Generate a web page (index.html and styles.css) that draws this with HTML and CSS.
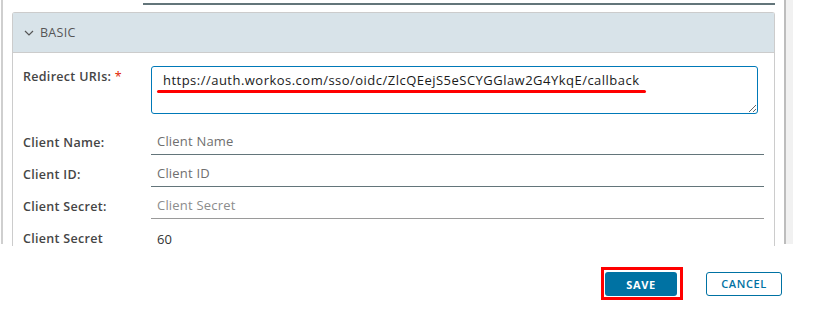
FILE: index.html
```html
<!DOCTYPE html>
<html lang="en">
<head>
  <meta charset="UTF-8">
  <title>OIDC Client Settings</title>
  <link rel="stylesheet" href="styles.css">
</head>
<body>

<div class="layout">
  <div class="gutter"></div>

  <div class="content">
    <!-- bottom edge of the field above -->
    <div class="prev-field"></div>

    <div class="panel">
      <div class="panel-head">
        <svg class="chevron" width="10" height="6" viewBox="0 0 10 6">
          <path d="M1 1 L5 5 L9 1" fill="none" stroke="#565656" stroke-width="1.2"/>
        </svg>
        BASIC
      </div>

      <div class="panel-body">
        <div class="row row-area">
          <label class="lbl">Redirect URIs: <span class="req">*</span></label>
          <div class="area-wrap">
            <textarea class="area">https://auth.workos.com/sso/oidc/ZlcQEejS5eSCYGGlaw2G4YkqE/callback</textarea>
            <div class="mark"></div>
          </div>
        </div>

        <div class="row">
          <label class="lbl">Client Name:</label>
          <input class="field" type="text" placeholder="Client Name">
        </div>

        <div class="row">
          <label class="lbl">Client ID:</label>
          <input class="field" type="text" placeholder="Client ID">
        </div>

        <div class="row">
          <label class="lbl">Client Secret:</label>
          <input class="field field-dim" type="text" placeholder="Client Secret">
        </div>

        <div class="row row-last">
          <label class="lbl">Client Secret</label>
          <span class="value">60</span>
        </div>
      </div>
    </div>
  </div>

  <div class="scroll"></div>
</div>

<div class="footer">
  <div class="highlight">
    <button class="btn btn-primary">SAVE</button>
  </div>
  <button class="btn btn-outline">CANCEL</button>
</div>

</body>
</html>
```

FILE: styles.css
```css
body {
  margin: 0;
  font-family: "Open Sans", "Noto Sans", sans-serif;
  color: #333;
  background: #fff;
  overflow: hidden;
}

.layout {
  display: flex;
  height: 244px;
}

.gutter {
  width: 9px;
  margin-left: 1px;
  border-left: 2px solid #cfcfcf;
}

.content {
  width: 763px;
}

.prev-field {
  margin-left: 131px;
  height: 3px;
  border-bottom: 2px solid #63757a;
  margin-bottom: 7px;
}

.panel {
  border: 1px solid #cccccc;
  border-bottom: none;
  border-radius: 3px 3px 0 0;
  height: 233px;
}

.panel-head {
  height: 39px;
  background: #d8e3e9;
  border-bottom: 1px solid #cccccc;
  display: flex;
  align-items: center;
  gap: 6px;
  padding-left: 11px;
  font-size: 12.5px;
  color: #565656;
  letter-spacing: 0.3px;
}

.chevron {
  margin-top: 1px;
}

.panel-body {
  padding: 13px 0 0 10px;
}

.row {
  display: flex;
  align-items: flex-end;
  height: 24px;
  margin-bottom: 8px;
}

.row-area {
  align-items: flex-start;
  height: 48px;
  margin-bottom: 17px;
}

.lbl {
  width: 128px;
  flex-shrink: 0;
  font-size: 12.5px;
  font-weight: 600;
  letter-spacing: 0.3px;
  color: #454545;
  padding-bottom: 4px;
}

.row-area .lbl {
  padding-top: 2px;
}

.req {
  color: #e12200;
  font-weight: 400;
}

.area-wrap {
  position: relative;
}

.area {
  display: block;
  box-sizing: border-box;
  width: 607px;
  height: 48px;
  border: 1px solid #0079b8;
  border-radius: 3px;
  padding: 4px 11px;
  font-family: inherit;
  font-size: 13px;
  letter-spacing: 0.48px;
  color: #1a1a1a;
  resize: vertical;
  outline: none;
}

/* red annotation under the url */
.mark {
  position: absolute;
  left: 6px;
  top: 24px;
  width: 489px;
  height: 3px;
  background: #ff0000;
  border-radius: 2px;
}

.field {
  box-sizing: border-box;
  width: 613px;
  height: 24px;
  border: none;
  border-bottom: 1px solid #63757a;
  padding: 0 6px 3px;
  font-family: inherit;
  font-size: 13px;
  letter-spacing: 0.2px;
  outline: none;
}

.field::placeholder {
  color: #6f6f6f;
}

.field-dim {
  border-bottom-color: #9a9a9a;
}

.field-dim::placeholder {
  color: #8c8c8c;
}

.row-last {
  align-items: flex-start;
  height: 18px;
  margin-bottom: 0;
}

.row-last .lbl {
  padding: 3px 0 0;
}

.value {
  font-size: 13px;
  padding: 3px 0 0 6px;
}

.scroll {
  width: 7px;
  margin-left: 9px;
  border-left: 2px solid #bdbdbd;
  background: #f1f1f1;
}

.footer {
  display: flex;
  align-items: center;
  padding: 23px 0 0 601px;
  gap: 23px;
}

.highlight {
  display: flex;
  border: 3px solid #ff0000;
  padding: 2px 3px 1px 1px;
}

.btn {
  height: 24px;
  font-family: inherit;
  font-size: 11px;
  font-weight: 700;
  letter-spacing: 0.6px;
  border-radius: 3px;
  cursor: pointer;
}

.btn-primary {
  width: 72px;
  background: #0072a3;
  color: #fff;
  border: none;
}

.btn-outline {
  width: 76px;
  background: #fff;
  color: #0072a3;
  border: 1px solid #0072a3;
  font-weight: 600;
}
```
